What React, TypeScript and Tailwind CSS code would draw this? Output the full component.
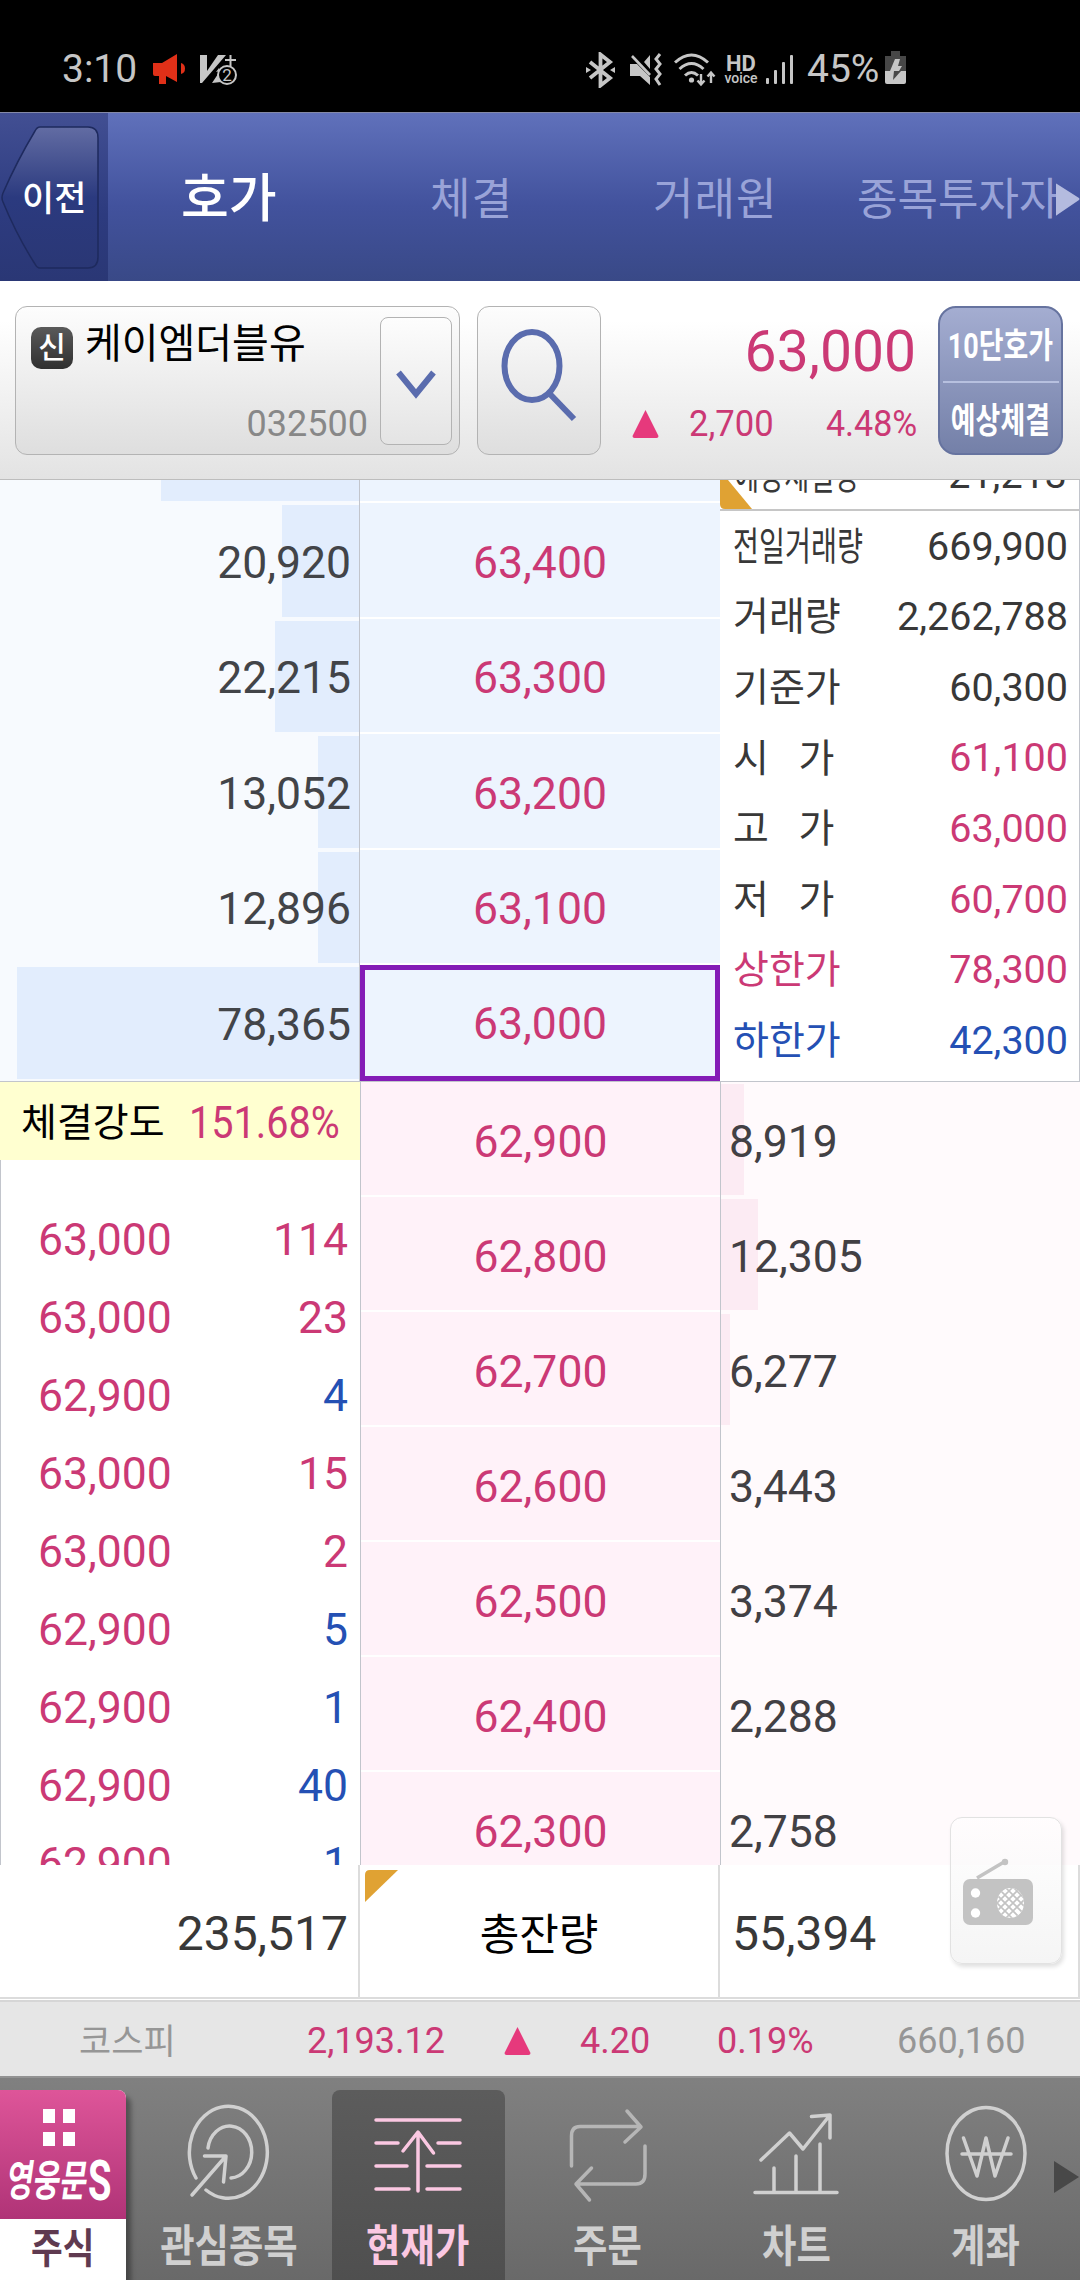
import type { ReactNode } from "react";
import clsx from "clsx";

interface OrderRow {
  price: string;
  amount: string;
  bar: number;
}

const asks: OrderRow[] = [
  { price: "63,400", amount: "20,920", bar: 77 },
  { price: "63,300", amount: "22,215", bar: 84 },
  { price: "63,200", amount: "13,052", bar: 41 },
  { price: "63,100", amount: "12,896", bar: 41 },
  { price: "63,000", amount: "78,365", bar: 342 },
];

const bids: OrderRow[] = [
  { price: "62,900", amount: "8,919", bar: 23 },
  { price: "62,800", amount: "12,305", bar: 37 },
  { price: "62,700", amount: "6,277", bar: 9 },
  { price: "62,600", amount: "3,443", bar: 0 },
  { price: "62,500", amount: "3,374", bar: 0 },
  { price: "62,400", amount: "2,288", bar: 0 },
  { price: "62,300", amount: "2,758", bar: 0 },
];

const trades = [
  { price: "63,000", amount: "114", up: true },
  { price: "63,000", amount: "23", up: true },
  { price: "62,900", amount: "4", up: false },
  { price: "63,000", amount: "15", up: true },
  { price: "63,000", amount: "2", up: true },
  { price: "62,900", amount: "5", up: false },
  { price: "62,900", amount: "1", up: false },
  { price: "62,900", amount: "40", up: false },
  { price: "62,900", amount: "1", up: false },
];

const summary = [
  { label: "전일거래량", value: "669,900", color: "text-[#383838]", narrow: true },
  { label: "거래량", value: "2,262,788", color: "text-[#383838]" },
  { label: "기준가", value: "60,300", color: "text-[#383838]" },
  { label: "시 가", value: "61,100", color: "text-[#cb3975]", spaced: true },
  { label: "고 가", value: "63,000", color: "text-[#cb3975]", spaced: true },
  { label: "저 가", value: "60,700", color: "text-[#cb3975]", spaced: true },
  { label: "상한가", value: "78,300", color: "text-[#cb3975]", tinted: true },
  { label: "하한가", value: "42,300", color: "text-[#2450b4]", tinted: true },
];

const StatusBar = () => (
  <div className="flex h-[112px] items-center bg-black pt-[27px] text-[39px] text-[#c6c6c6]">
    <span className="ml-[62px] w-[91px]">3:10</span>
    <svg className="mt-[-1px] h-[32px] w-[34px]" viewBox="0 0 34 32" fill="#e03018">
      <path d="M0 10h9L24 1v28L13 23v8H6v-8H2q-2 0-2-2z" />
      <path d="M28 10q4 1 4 5.500t-4 5.500z" />
    </svg>
    <svg className="ml-[13px] h-[32px] w-[38px]" viewBox="0 0 38 32" fill="#c6c6c6">
      <path d="M0 1h7v16L18 1h8L2 29H0z" />
      <path d="M12 29l8-12-4 1 3-4 2 14z" />
      <path d="M25 6h11M30.500 1v11" stroke="#c6c6c6" strokeWidth="2" />
      <circle cx="27" cy="21" r="9" fill="#000" stroke="#c6c6c6" strokeWidth="2" />
      <text x="27" y="27" fontSize="17" textAnchor="middle" fontFamily="Roboto">
        2
      </text>
    </svg>

    <svg className="ml-[348px] h-[36px] w-[30px]" viewBox="0 0 30 36" fill="none" stroke="#c6c6c6" strokeWidth="3.800">
      <path d="M4 10l20 16-9.500 7.500V2.500L24 10 4 26" />
      <path d="M0 15l5 3-5 3zM29 15l-5 3 5 3z" fill="#c6c6c6" stroke="none" />
    </svg>
    <svg className="ml-[14px] h-[34px] w-[33px]" viewBox="0 0 33 34" fill="#c6c6c6">
      <path d="M0 11h7l13 13v8l-10-9H0zM20 2v14l-6-7z" />
      <path d="M2 3l18 19" stroke="#c6c6c6" strokeWidth="2.600" />
      <path d="M30 1l-4 5 4 5-4 5 4 5-4 5 4 6" fill="none" stroke="#c6c6c6" strokeWidth="3" />
    </svg>
    <svg className="ml-[11px] h-[34px] w-[42px]" viewBox="0 0 42 34" fill="none" stroke="#c6c6c6" strokeWidth="3">
      <path d="M1 9.500q16.500-15 33 0M5.500 16q12-11 24 0M11 22.500q6.500-6 13 0" />
      <circle cx="17.500" cy="27" r="2.600" fill="#c6c6c6" stroke="none" />
      <path d="M27 21v10M23.500 27.500l3.500 4 3.500-4M37 30V20M33.500 23.500l3.500-4 3.500 4" strokeWidth="2.400" />
    </svg>
    <div className="ml-[8px] flex w-[34px] flex-col items-center">
      <span className="text-[22px] leading-[17px] font-bold">HD</span>
      <span className="text-[14px] leading-[13px] font-medium">voice</span>
    </div>
    <svg className="ml-[8px] h-[32px] w-[28px]" viewBox="0 0 28 32" fill="#c6c6c6">
      <rect x="0" y="24" width="3" height="6" rx="1" />
      <rect x="8" y="16" width="3" height="14" rx="1" />
      <rect x="16" y="8" width="3" height="22" rx="1" />
      <rect x="24" y="1" width="3" height="29" rx="1" />
    </svg>
    <span className="ml-[13px] w-[78px]">45%</span>
    <svg className="mt-[-3px] h-[34px] w-[22px]" viewBox="0 0 22 34">
      <path d="M6 0h9v5h6v17H0V5h6z" fill="#474747" />
      <path d="M0 20h21v11q0 2-2 2H2q-2 0-2-2z" fill="#c6c6c6" />
      <path d="M10 8h5l-2 7h4l-3 5H5z" fill="#c6c6c6" />
      <path d="M9 20h7l-8 9z" fill="#474747" />
    </svg>
  </div>
);

const Header = () => (
  <header className="flex h-[169px] border-t border-[#8489a8] bg-linear-to-b from-[#6071bb] via-[#42529d] via-55% to-[#394987] text-[44px] text-[#99a3d8]">
    <div className="relative flex w-[108px] shrink-0 items-center bg-linear-to-b from-[#424f93] via-[#2d3b7f] via-60% to-[#2a3775]">
      <svg className="absolute top-[13px] left-[1px] h-[143px] w-[99px]" viewBox="0 0 99 143">
        <defs>
          <linearGradient id="back" x1="0" y1="0" x2="0" y2="1">
            <stop offset="0" stopColor="#626ca3" />
            <stop offset="0.500" stopColor="#2b3a7f" />
            <stop offset="1" stopColor="#2a3775" />
          </linearGradient>
        </defs>
        <path
          d="M39 1h48q10 0 10 11v119q0 11-10 11H39q-3 0-5-4Q16 110 2 76q-2-4 0-9Q16 35 34 5q2-4 5-4z"
          fill="url(#back)"
          stroke="#1e2a5e"
          strokeWidth="1.500"
        />
      </svg>
      <span className="relative ml-[22px] pt-[5px] text-[35px] font-medium text-white">이전</span>
    </div>
    <div className="flex flex-1 items-center overflow-hidden pt-[6px] whitespace-nowrap">
      <span className="ml-[73px] w-[249px] text-[52px] font-medium text-white">호가</span>
      <span className="w-[223px] tracking-[1px]">체결</span>
      <span className="w-[204px] tracking-[1px]">거래원</span>
      <span className="w-[199px]">종목투자자</span>
      <svg className="mt-[-2px] h-[33px] w-[24px] shrink-0" viewBox="0 0 24 33" fill="#b4bbdf">
        <path d="M0 1q0-1 1 0l22 14q1 1 0 2L1 32q-1 1-1 0z" />
      </svg>
    </div>
  </header>
);

const UpArrow = () => (
  <svg className="h-[28px] w-[27px]" viewBox="0 0 27 28" fill="#e6397c">
    <path d="M13.500 0l13 26q0 2-2 2h-22q-2 0-2-2z" />
  </svg>
);

const StockPanel = () => (
  <section className="flex h-[199px] items-start border-b border-[#bdbdbd] bg-linear-to-b from-white from-20% to-[#e3e3e3] pt-[25px]">
    <div className="ml-[15px] flex h-[149px] w-[445px] justify-between rounded-xl border border-[#b3b3b3] bg-linear-to-b from-[#fdfdfd] to-[#dedede] pt-[10px] pr-[7px]">
      <div className="w-[353px]">
        <div className="flex h-[52px] items-center pl-[15px]">
          <span className="mt-[9px] flex h-[42px] w-[42px] items-center justify-center rounded-[10px] bg-linear-to-b from-[#5a5a5a] to-[#303030] text-[30px] font-medium text-white">
            신
          </span>
          <span className="mt-[3px] ml-[12px] origin-left scale-x-[0.975] text-[41px] text-black">케이엠더블유</span>
        </div>
        <div className="mt-[37px] pr-[1px] text-right text-[36px] text-[#888]">032500</div>
      </div>
      <button className="flex h-[128px] w-[72px] items-center justify-center rounded-lg border border-[#b3b3b3] bg-linear-to-b from-[#fdfdfd] to-[#e4e4e4]">
        <svg className="mt-[8px] h-[30px] w-[40px]" viewBox="0 0 40 30" fill="none" stroke="#5a6cae" strokeWidth="6">
          <path d="M2.500 2.500L20 24 37.500 2.500" />
        </svg>
      </button>
    </div>
    <button className="ml-[17px] h-[149px] w-[124px] rounded-xl border border-[#b3b3b3] bg-linear-to-b from-[#fdfdfd] to-[#dedede]">
      <svg className="mt-[-10px] ml-[22px] h-[96px] w-[80px]" viewBox="0 0 80 96" fill="none" stroke="#5a6cae">
        <ellipse cx="32" cy="38" rx="27.500" ry="34" strokeWidth="6" />
        <path d="M48 64l26 27" strokeWidth="6" />
      </svg>
    </button>
    <div className="w-[316px] text-[#cb3975]">
      <div className="mt-[13px] pr-[1px] text-right text-[57px] leading-[66px]">63,000</div>
      <div className="mt-[18px] flex items-center text-[37px] leading-[42px]">
        <span className="ml-[31px] w-[57px]">
          <UpArrow />
        </span>
        <span className="origin-left scale-x-[0.935]">2,700</span>
        <span className="ml-auto origin-right scale-x-[0.92]">4.48%</span>
      </div>
    </div>
    <button className="ml-[21px] flex h-[149px] w-[125px] flex-col items-center rounded-[18px] border-2 border-[#66739f] bg-linear-to-b from-[#a4add1] to-[#7480a8] text-[35px] font-bold text-white">
      <span className="flex h-[75px] w-[116px] items-center justify-center border-b-2 border-[#b7c0df] pt-[3px]">
        <span className="scale-x-[0.77] whitespace-nowrap">10단호가</span>
      </span>
      <span className="flex h-[70px] items-center justify-center pt-[6px]">
        <span className="scale-x-[0.77] whitespace-nowrap">예상체결</span>
      </span>
    </button>
  </section>
);

const AskAmounts = () => (
  <div className="w-[360px] border-r border-[#c2c5cc] bg-[#f7fafe]">
    <div className="ml-auto h-[21px] w-[198px] bg-[#e2edfd]" />
    <div className="h-[2px]" />
    {asks.map((row) => (
      <div key={row.price} className="relative h-[115.600px] py-[2px]">
        <div className="ml-auto h-full bg-[#e2edfd]" style={{ width: row.bar }} />
        <span className="absolute inset-0 flex items-center justify-end pt-[4px] pr-[8px] text-[#424448]">{row.amount}</span>
      </div>
    ))}
  </div>
);

const AskPrices = () => (
  <div className="w-[360px] text-[#cb3975]">
    <div className="mb-[2px] h-[21px] bg-[#edf4fe]" />
    {asks.map((row) => (
      <div
        key={row.price}
        className={clsx(
          "flex h-[115.600px] items-center justify-center bg-[#edf4fe]",
          row.price === "63,000" ? "border-[5px] border-[#841cb6] pt-[3px]" : "border-b-2 border-white pt-[6px]"
        )}
      >
        {row.price}
      </div>
    ))}
  </div>
);

const Summary = () => (
  <div className="relative w-[360px] border-r border-[#c2c5cc] bg-white text-[39.500px] leading-none text-[#383838]">
    <div className="relative h-[31px] overflow-hidden border-b-2 border-[#c6c6c6]">
      <svg className="absolute top-0 left-0 h-[29px] w-[32px]" viewBox="0 0 32 29" fill="#e0a233">
        <path d="M0 0h8l24 29H5q-5 0-5-5z" />
      </svg>
      <div className="relative mt-[-25px] flex justify-between pr-[12px] pl-[14px]">
        <span className="w-[130px] origin-left scale-x-[0.7] pt-[2px] text-[39px] whitespace-nowrap">예상체결량</span>
        <span>21,213</span>
      </div>
    </div>
    {summary.map((item) => (
      <div key={item.label} className="flex h-[70.600px] items-center justify-between pr-[11px] pl-[13px]">
        <span
          className={clsx(
            "pt-[2px] text-[39px] whitespace-nowrap",
            item.narrow && "w-[130px] origin-left scale-x-[0.725]",
            item.spaced && "[word-spacing:20px]",
            item.tinted && item.color
          )}
        >
          {item.label}
        </span>
        <span className={item.color}>{item.value}</span>
      </div>
    ))}
  </div>
);

const Trades = () => (
  <div className="h-[783px] w-[361px] overflow-hidden border-r border-[#c2c5cc] bg-white">
    <div className="flex h-[78px] items-center bg-[#ffffd0]">
      <span className="ml-[21px] w-[144px] shrink-0 pt-[4px] text-[39px] whitespace-nowrap text-black">체결강도</span>
      <span className="ml-[24px] origin-left scale-x-[0.89] pt-[4px] text-[#cb3975]">151.68%</span>
    </div>
    <div className="border-l border-[#c2c5cc] pt-[41px]">
      {trades.map((trade, i) => (
        <div key={i} className="flex h-[78px] items-center justify-between pr-[12px] pl-[37px]">
          <span className="text-[#cb3975]">{trade.price}</span>
          <span className={trade.up ? "text-[#cb3975]" : "text-[#2450b4]"}>{trade.amount}</span>
        </div>
      ))}
    </div>
  </div>
);

const RadioButton = () => (
  <button className="absolute top-[1817px] left-[950px] h-[147px] w-[112px] rounded-xl border border-[#e2e2e2] bg-linear-to-b from-white/50 to-[#f5f5f5] shadow-[2px_3px_4px_rgba(0,0,0,0.120)]">
    <svg className="mt-[2px] ml-[11px] h-[68px] w-[74px]" viewBox="0 0 74 68">
      <path d="M15 20L42 4" stroke="#c3c3c3" strokeWidth="3.500" />
      <circle cx="43" cy="4" r="3.200" fill="#c3c3c3" />
      <rect x="1" y="21" width="70" height="46" rx="7" fill="#c3c3c3" />
      <circle cx="13.500" cy="35" r="4.700" fill="#fff" />
      <circle cx="13.500" cy="55" r="4.700" fill="#fff" />
      <clipPath id="speaker">
        <ellipse cx="48.500" cy="45" rx="13.500" ry="15" />
      </clipPath>
      <g clipPath="url(#speaker)">
        <rect x="34" y="29" width="30" height="32" fill="#fff" />
        <path
          d="M28 38l28 28M28 30l36 36M32 26l36 36M38 24l28 28M46 24l20 20M28 52l28-28M28 60l36-36M32 64l36-36M40 64l28-28M28 44l20-20"
          stroke="#c3c3c3"
          strokeWidth="1.600"
        />
      </g>
    </svg>
  </button>
);

const Totals = () => (
  <div className="flex h-[132px] bg-white text-[48px]">
    <div className="flex w-[360px] items-center justify-end border-r-2 border-[#dcdcdc] pt-[6px] pr-[10px] text-[#383838]">235,517</div>
    <div className="relative flex w-[360px] items-center justify-center border-r-2 border-[#dcdcdc] pt-[8px] text-[43px] text-black">
      <svg className="absolute top-[5px] left-[5px] h-[32px] w-[33px]" viewBox="0 0 33 32" fill="#e0a233">
        <path d="M5 0h28L0 32V5q0-5 5-5z" />
      </svg>
      총잔량
    </div>
    <div className="flex w-[360px] items-center border-r-2 border-[#dcdcdc] pt-[6px] pl-[12px] text-[#383838]">55,394</div>
  </div>
);

const Ticker = () => (
  <div className="flex h-[76px] items-center border-t-2 border-[#d6d6d6] bg-[#e6e6e6] pt-[4px] text-[36px] text-[#cb3975]">
    <span className="ml-[79px] w-[228px] pt-[2px] text-[35px] text-[#969696]">코스피</span>
    <span className="w-[197px]">2,193.12</span>
    <span className="w-[76px]">
      <UpArrow />
    </span>
    <span className="w-[137px]">4.20</span>
    <span className="w-[180px]">0.19%</span>
    <span className="text-[#969696]">660,160</span>
  </div>
);

interface NavItemProps {
  label: string;
  active?: boolean;
  dim?: boolean;
  children: ReactNode;
}

const NavItem = ({ label, active, dim, children }: NavItemProps) => (
  <div className="flex w-[189.300px] justify-center pt-[12px]">
    <div
      className={clsx(
        "flex h-[190px] w-[173px] flex-col items-center rounded-t-lg pt-[13px]",
        active ? "bg-linear-to-b from-[#5c5c5c] to-[#4f4f4f] text-[#fbc8e2]" : dim ? "text-[#b6b6b6]" : "text-[#d0d0d0]"
      )}
    >
      <svg
        className="mr-[2px] h-[100px] w-[90px] shrink-0"
        viewBox="0 0 90 100"
        fill="none"
        stroke="currentColor"
        strokeWidth="3.500"
        strokeLinecap="round"
        strokeLinejoin="round"
      >
        {children}
      </svg>
      <span
        className={clsx(
          "mt-[18px] mr-[2px] scale-x-[0.85] text-[44px] leading-[52px] font-bold whitespace-nowrap",
          !active && "text-[#d0d0d0]"
        )}
      >
        {label}
      </span>
    </div>
  </div>
);

const BottomNav = () => (
  <nav className="relative flex h-[204px] overflow-hidden border-t-2 border-[#939393] bg-linear-to-b from-[#808080] to-[#696969]">
    <div className="mt-[12px] h-[190px] w-[126px] shrink-0 overflow-hidden rounded-tr-lg bg-white shadow-[5px_6px_5px_rgba(0,0,0,0.350)]">
      <div className="flex h-[129px] flex-col items-center bg-linear-to-b from-[#de5599] to-[#b03377] text-white">
        <div className="mt-[19px] mr-[8px] grid grid-cols-2 gap-x-[8px] gap-y-[9px]">
          <i className="h-[14px] w-[12px] bg-white" />
          <i className="h-[14px] w-[12px] bg-white" />
          <i className="h-[14px] w-[12px] bg-white" />
          <i className="h-[14px] w-[12px] bg-white" />
        </div>
        <div className="mt-[8px] flex h-[54px] w-[126px] items-center pl-[7px] leading-none font-bold">
          <span className="w-[81px] shrink-0 origin-left scale-x-[0.68] -skew-x-12 text-[43px] whitespace-nowrap">
            영웅문
          </span>
          <span className="origin-left scale-x-[0.68] text-[56px]">S</span>
        </div>
      </div>
      <div className="flex h-[61px] items-center justify-center text-[41px] font-bold text-[#5f3a50]">
        <span className="scale-x-[0.84]">주식</span>
      </div>
    </div>
    <div className="ml-[9px] flex">
      <NavItem label="관심종목">
        <path d="M12 75A39 46 0 1 1 22 87" />
        <path d="M24 45A22 26 0 1 1 47 75" />
        <path d="M8 92L42 53M20.500 53H42L39.500 79" />
      </NavItem>
      <NavItem label="현재가" active>
        <path d="M3 17H87M3 40H25M65 40H87M3 63H34M54 63H87M3 86H36M54 86H87" />
        <path d="M45 88V30M30 48L45 29L60.500 50" />
      </NavItem>
      <NavItem label="주문" dim>
        <path d="M9.500 63V33Q9.500 23.500 18 23.500H78M65 8L79 24L63 39" />
        <path d="M83 43V71Q83 81 74 81H15M29.500 65L14 81L27.500 97" />
      </NavItem>
      <NavItem label="차트">
        <path d="M3 89.500H85M22 89V65M44 89V53M68 89V41" />
        <path d="M9 57L37.500 30L51 46L78 12M59.500 13.500L78 12V35" />
      </NavItem>
      <NavItem label="계좌">
        <ellipse cx="45" cy="50.500" rx="39" ry="46" />
        <path d="M22.500 35L36 73L45 35L54 73L67 35M21 51H70" />
      </NavItem>
    </div>
    <svg className="absolute top-[82px] right-0 h-[34px] w-[26px]" viewBox="0 0 26 34" fill="#484848">
      <path d="M0 1l25 16L0 33z" />
    </svg>
  </nav>
);

const App = () => {
  return (
    <div className="relative h-[2280px] w-[1080px] overflow-hidden bg-white font-[Roboto,'Noto_Sans_CJK_KR',sans-serif] leading-none">
      <StatusBar />
      <Header />
      <StockPanel />
      <main className="h-[1385px] overflow-hidden text-[44.500px]">
        <div className="flex h-[602px] overflow-hidden border-b border-[#c2c5cc]">
          <AskAmounts />
          <AskPrices />
          <Summary />
        </div>
        <div className="flex h-[783px]">
          <Trades />
          <div className="w-[359px] text-[#cb3975]">
            {bids.map((row) => (
              <div key={row.price} className="flex h-[115px] items-center justify-center border-b-2 border-white bg-[#fff2f9] pt-[7px]">
                {row.price}
              </div>
            ))}
          </div>
          <div className="flex-1 border-l border-[#c2c5cc] bg-[#fffafc]">
            {bids.map((row) => (
              <div key={row.price} className="relative h-[115px] py-[2px]">
                <div className="h-full bg-[#fcebf3]" style={{ width: row.bar }} />
                <span className="absolute inset-0 flex items-center pt-[6px] pl-[8px] text-[#424044]">{row.amount}</span>
              </div>
            ))}
          </div>
        </div>
      </main>
      <Totals />
      <div className="h-[3px] border-t-2 border-[#dcdcdc] bg-white" />
      <Ticker />
      <BottomNav />
      <RadioButton />
    </div>
  );
};

export default App;
